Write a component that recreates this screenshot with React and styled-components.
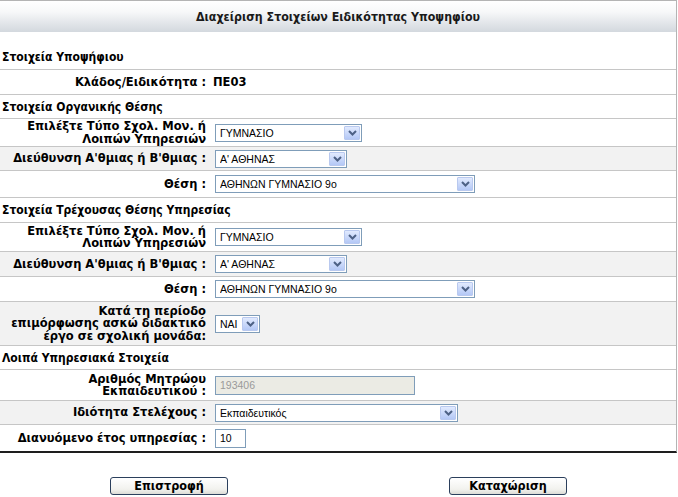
import React from "react"
import styled, { createGlobalStyle } from "styled-components"

const GlobalStyle = createGlobalStyle`
    html, body {
        margin: 0;
        padding: 0;
        background: #ffffff;
    }
    body {
        font-family: "DejaVu Sans", Verdana, sans-serif;
        color: #000000;
    }
`

function Arrow() {
    return (
        <ArrowBox>
            <svg width="9" height="6" viewBox="0 0 9 6">
                <path d="M1 1 L4.5 4.5 L8 1" fill="none" stroke="#4d6185" strokeWidth="2" />
            </svg>
        </ArrowBox>
    )
}

function Select({ width, children }) {
    return (
        <SelectBox $width={width}>
            <SelectText>{children}</SelectText>
            <Arrow />
        </SelectBox>
    )
}

function Row({ label, gray, h, children }) {
    return (
        <FieldRow $gray={gray} $h={h}>
            <Label>{label}</Label>
            <Value>{children}</Value>
        </FieldRow>
    )
}

const schoolLabel = <>Επιλέξτε Τύπο Σχολ. Μον. ή<br />Λοιπών Υπηρεσιών</>

export default function App() {
    return (
        <>
            <GlobalStyle />
            <Page>
                <Panel>
                    <Header>Διαχείριση Στοιχείων Ειδικότητας Υποψηφίου</Header>
                    <Spacer />
                    <Section $h={25}>Στοιχεία Υποψήφιου</Section>
                    <Row h={24} label="Κλάδος/Ειδικότητα :">
                        <Plain>ΠΕ03</Plain>
                    </Row>

                    <Section $h={23}>Στοιχεία Οργανικής Θέσης</Section>
                    <Row h={27} label={schoolLabel}>
                        <Select width={147}>ΓΥΜΝΑΣΙΟ</Select>
                    </Row>
                    <Row h={23} gray label="Διεύθυνση Α'θμιας ή Β'θμιας :">
                        <Select width={132}>Α' ΑΘΗΝΑΣ</Select>
                    </Row>
                    <Row h={26} label="Θέση :">
                        <Select width={260}>ΑΘΗΝΩΝ ΓΥΜΝΑΣΙΟ 9ο</Select>
                    </Row>

                    <Section $h={24}>Στοιχεία Τρέχουσας Θέσης Υπηρεσίας</Section>
                    <Row h={28} label={schoolLabel}>
                        <Select width={147}>ΓΥΜΝΑΣΙΟ</Select>
                    </Row>
                    <Row h={24} gray label="Διεύθυνση Α'θμιας ή Β'θμιας :">
                        <Select width={132}>Α' ΑΘΗΝΑΣ</Select>
                    </Row>
                    <Row h={24} label="Θέση :">
                        <Select width={260}>ΑΘΗΝΩΝ ΓΥΜΝΑΣΙΟ 9ο</Select>
                    </Row>
                    <Row h={43} gray label={<>Κατά τη περίοδο<br />επιμόρφωσης ασκώ διδακτικό<br />έργο σε σχολική μονάδα:</>}>
                        <Select width={45}>ΝΑΙ</Select>
                    </Row>

                    <Section $h={23}>Λοιπά Υπηρεσιακά Στοιχεία</Section>
                    <Row h={30} label={<>Αριθμός Μητρώου<br />Εκπαιδευτικού :</>}>
                        <TextInput $width={200} disabled>193406</TextInput>
                    </Row>
                    <Row h={23} gray label="Ιδιότητα Στελέχους :">
                        <Select width={243}>Εκπαιδευτικός</Select>
                    </Row>
                    <Row h={26} label="Διανυόμενο έτος υπηρεσίας :">
                        <TextInput $width={31}>10</TextInput>
                    </Row>
                </Panel>

                <Actions>
                    <Button>Επιστροφή</Button>
                    <Button>Καταχώριση</Button>
                </Actions>
            </Page>
        </>
    )
}

const Page = styled.div`
    width: 678px;
    height: 497px;
    background: #ffffff;
`

const Panel = styled.div`
    width: 676px;
    border-top: 1px solid #b4b4b4;
    border-right: 1px solid #b4b4b4;
    border-bottom: 2px solid #1e1e1e;
`

const Header = styled.div`
    height: 31px;
    display: flex;
    align-items: center;
    justify-content: center;
    background: linear-gradient(#ffffff 0%, #f7f8f9 35%, #e3e6ea 70%, #d3d8de 100%);
    font-family: "DejaVu Sans Condensed", "DejaVu Sans", sans-serif;
    font-weight: bold;
    font-size: 12.3px;
    color: #1a1a1a;
`

const Spacer = styled.div`
    height: 12px;
`

const Section = styled.div`
    height: ${p => p.$h}px;
    display: flex;
    align-items: center;
    padding-left: 2px;
    border-bottom: 1px solid #c6c6c6;
    font-family: "DejaVu Sans Condensed", "DejaVu Sans", sans-serif;
    font-weight: bold;
    font-size: 12px;
`

const FieldRow = styled.div`
    display: flex;
    align-items: center;
    height: ${p => p.$h}px;
    border-bottom: 1px solid #c6c6c6;
    background: ${p => (p.$gray ? "#f2f2f2" : "#ffffff")};
    &:last-child {
        border-bottom: none;
    }
`

const Label = styled.div`
    width: 206px;
    flex: none;
    text-align: right;
    font-weight: bold;
    font-size: 11.5px;
    line-height: 12.5px;
`

const Value = styled.div`
    flex: 1;
    display: flex;
    align-items: center;
    padding-left: 9px;
`

const Plain = styled.span`
    font-weight: bold;
    font-size: 11.5px;
    margin-left: -2px;
`

const SelectBox = styled.div`
    box-sizing: border-box;
    width: ${p => p.$width}px;
    height: 18px;
    border: 1px solid #7f9db9;
    background: #ffffff;
    display: flex;
    align-items: center;
    padding: 0 1px 0 4px;
`

const SelectText = styled.span`
    flex: 1;
    font-family: "Liberation Sans", Arial, sans-serif;
    font-size: 10.5px;
    white-space: nowrap;
    overflow: hidden;
`

const ArrowBox = styled.span`
    box-sizing: border-box;
    width: 16px;
    height: 14px;
    flex: none;
    display: flex;
    align-items: center;
    justify-content: center;
    border: 1px solid #b9c9ef;
    border-radius: 1px;
    background: linear-gradient(#e1eafe, #b4c8f6);
`

const TextInput = styled.div`
    box-sizing: border-box;
    width: ${p => p.$width}px;
    height: 19px;
    border: 1px solid #7f9db9;
    background: ${p => (p.disabled ? "#ebebe4" : "#ffffff")};
    color: ${p => (p.disabled ? "#9a9a9a" : "#000000")};
    font-family: "Liberation Sans", Arial, sans-serif;
    font-size: 10.5px;
    display: flex;
    align-items: center;
    padding-left: 4px;
`

const Actions = styled.div`
    display: flex;
    padding-top: 24px;
    padding-left: 110px;
    gap: 221px;
`

const Button = styled.button`
    width: 118px;
    height: 18px;
    padding: 0;
    border: 1px solid #2b3f5c;
    border-radius: 3px;
    background: linear-gradient(#ffffff, #f2f2ee 70%, #dcdcd6);
    font-family: "DejaVu Sans Condensed", "Liberation Sans Narrow", sans-serif;
    font-weight: bold;
    font-size: 12.5px;
    line-height: 16px;
    color: #000000;
`
